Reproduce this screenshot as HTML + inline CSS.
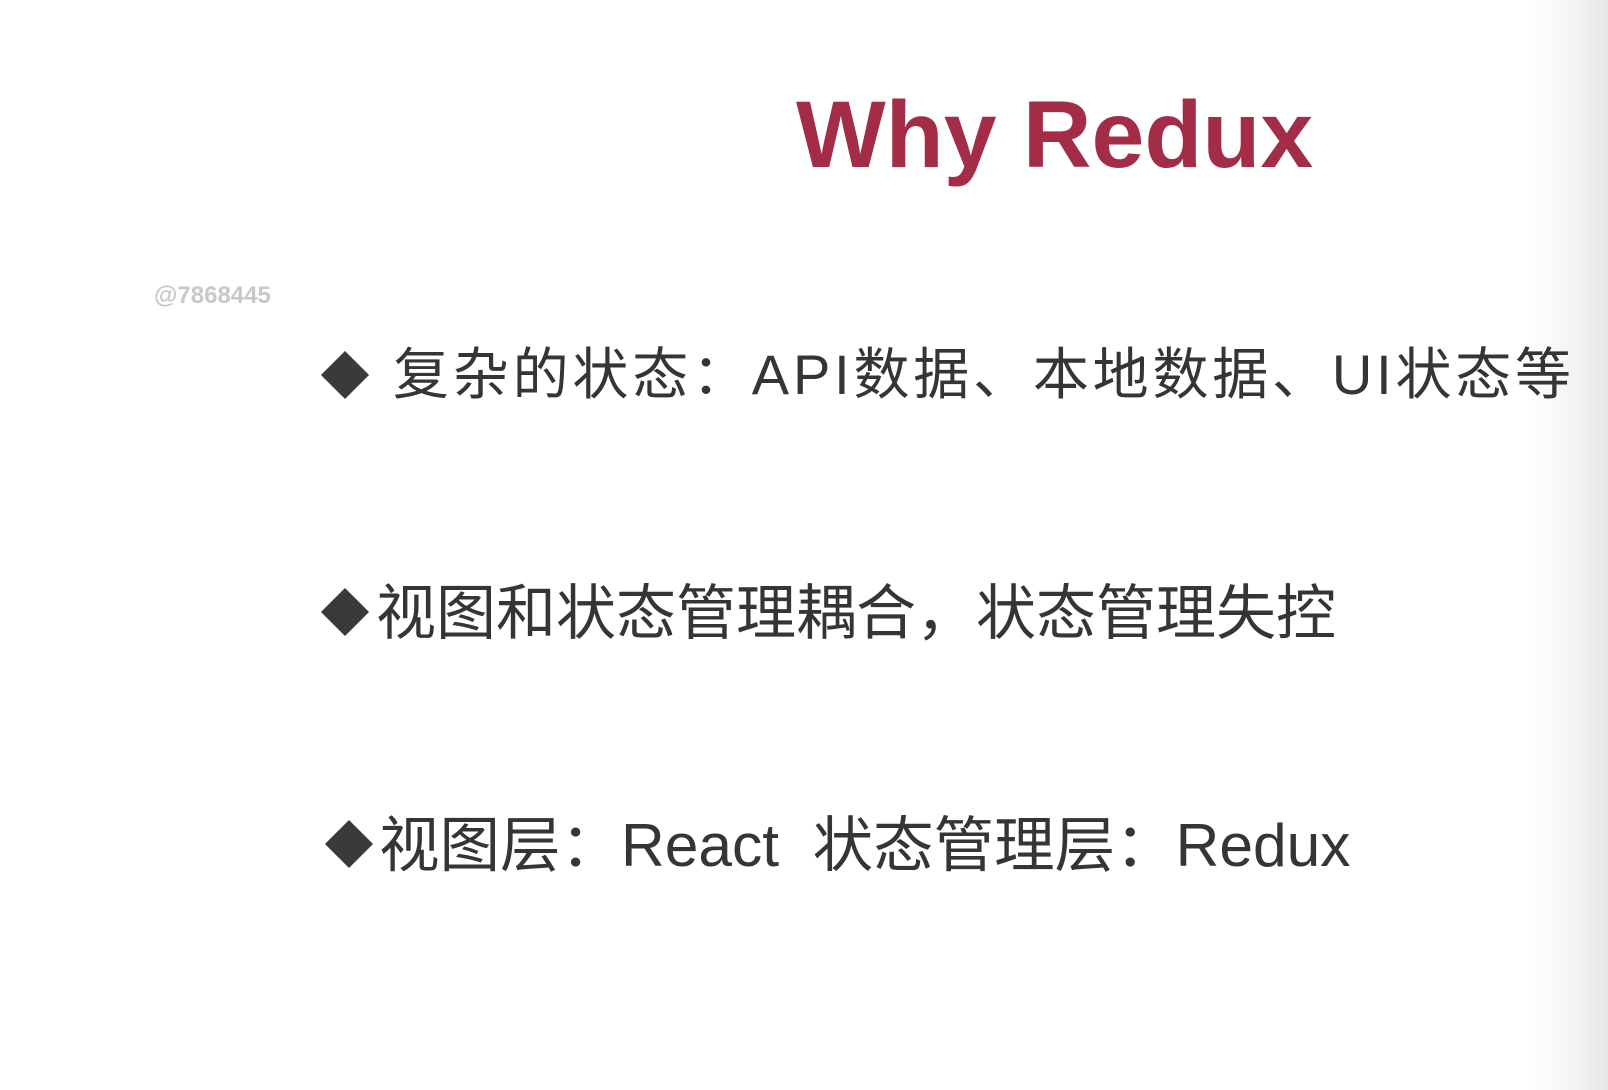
<!DOCTYPE html>
<html><head><meta charset="utf-8"><style>
html,body{margin:0;padding:0}
body{width:1608px;height:1090px;position:relative;overflow:hidden;background:linear-gradient(to right,#fff 0,#fff 1530px,#f3f3f3 1575px,#e6e6e6 1608px);font-family:"Liberation Sans","Noto Sans CJK SC",sans-serif;color:#353535}
.t{position:absolute;left:796px;top:88px;font-weight:bold;font-size:95px;color:#a32c47;white-space:nowrap;line-height:1}
.wm{position:absolute;left:154px;top:282px;font-size:24px;font-weight:bold;color:#c8c8c8}
.d{position:absolute;width:34px;height:34px;background:#3a3a3a;transform:rotate(45deg)}
.l{position:absolute;white-space:nowrap;line-height:1}
</style></head><body>
<div class="t">Why Redux</div>
<div class="wm">@7868445</div>
<div class="d" style="left:328px;top:358px"></div>
<div class="l" style="left:393px;top:347px;font-size:56px;letter-spacing:3.8px">复杂的状态：API数据、本地数据、UI状态等</div>
<div class="d" style="left:328px;top:595px"></div>
<div class="l" style="left:376px;top:584px;font-size:60px">视图和状态管理耦合，状态管理失控</div>
<div class="d" style="left:332px;top:827px"></div>
<div class="l" style="left:379px;top:815px;font-size:60.5px">视图层：React&nbsp; 状态管理层：Redux</div>
</body></html>
